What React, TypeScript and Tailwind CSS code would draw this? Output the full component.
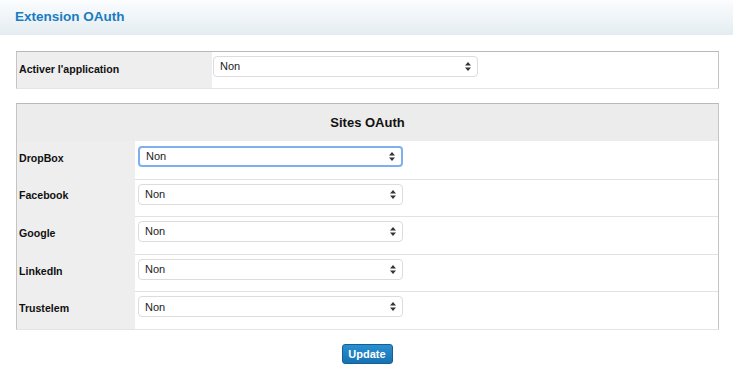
import React from 'react';

function Arrows() {
  return (
    <svg width="6" height="9" viewBox="0 0 6 9" className="shrink-0">
      <path d="M3 0 L6 3.5 L0 3.5 Z" fill="#333" />
      <path d="M3 9 L6 5.5 L0 5.5 Z" fill="#333" />
    </svg>
  );
}

function FakeSelect({ focused = false }: { focused?: boolean }) {
  return (
    <div
      className={
        'flex items-center justify-between w-[265px] h-[21px] bg-white rounded-[4px] pl-[6px] pr-[6px] text-[11px] text-[#222] ' +
        (focused
          ? 'border-2 border-[#7db0ec] pl-[5px] pr-[5px]'
          : 'border border-[#dcdcdc]')
      }
    >
      <span>Non</span>
      <Arrows />
    </div>
  );
}

const sites = ['DropBox', 'Facebook', 'Google', 'LinkedIn', 'Trustelem'];

export default function App() {
  return (
    <div className="w-[733px] h-[368px] bg-white overflow-hidden font-['Liberation_Sans',Arial,sans-serif] text-[#111]">
      <header className="h-[35px] bg-gradient-to-b from-[#fbfdfe] to-[#e4ecf1] flex items-center px-[15px]">
        <h1 className="text-[13.5px] font-bold text-[#1a7cc1]">Extension OAuth</h1>
      </header>

      {/* Activer l'application */}
      <div className="mt-[16px] ml-[16px] w-[703px] h-[38px] flex border-t border-l border-r border-t-[#b9b9b9] border-l-[#c4c4c4] border-r-[#c4c4c4] border-b border-b-[#e4e4e4]">
        <div className="w-[195px] bg-[#eeeeee] flex items-center pl-[2px] text-[10.6px] font-bold">
          Activer l'application
        </div>
        <div className="flex-1 flex items-start pt-[4px] pl-[1px]">
          <FakeSelect />
        </div>
      </div>

      {/* Sites OAuth */}
      <div className="mt-[14px] ml-[16px] w-[703px] flex flex-col border-t border-l border-r border-t-[#b9b9b9] border-l-[#c4c4c4] border-r-[#c4c4c4] border-b border-b-[#e4e4e4]">
        <div className="h-[37px] bg-[#ececec] flex items-center justify-center text-[13px] font-bold">
          Sites OAuth
        </div>
        {sites.map((s, i) => (
          <div key={s} className="h-[37.6px] flex">
            <div className="w-[118px] bg-[#eeeeee] flex items-center pl-[2px] pb-[2px] text-[10.6px] font-bold">{s}</div>
            <div
              className={
                'flex-1 flex items-start pl-[3px] ' +
                (i > 0 ? 'border-t border-t-[#e2e2e2] pt-[4px]' : 'pt-[5px]')
              }
            >
              <FakeSelect focused={i === 0} />
            </div>
          </div>
        ))}
      </div>

      <div className="flex justify-center mt-[14px] pl-[1px]">
        <button className="w-[51px] h-[20px] rounded-[3px] bg-gradient-to-b from-[#2a8fd0] to-[#1672b4] border border-[#155f95] text-white text-[11px] font-bold">
          Update
        </button>
      </div>
    </div>
  );
}
